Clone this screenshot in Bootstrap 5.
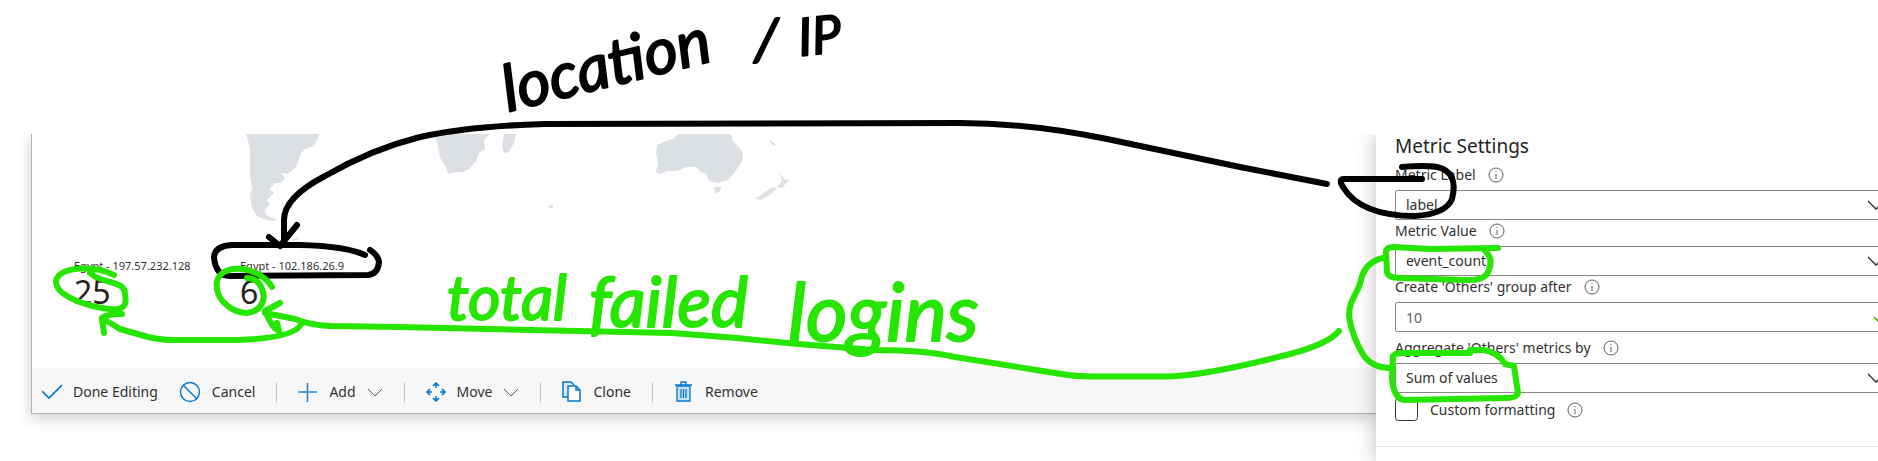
<!DOCTYPE html>
<html lang="en">
<head>
<meta charset="utf-8">
<meta name="viewport" content="width=device-width, initial-scale=1">
<title>Metric Settings</title>
<link href="https://cdn.jsdelivr.net/npm/bootstrap@5.3.0/dist/css/bootstrap.min.css" rel="stylesheet">
<style>
  body { font-family: "Noto Sans", "Open Sans", sans-serif; font-size: 14px; line-height: 20px; color: #323130; background: #fff; }
  .stage { padding-top: 134px; }
  .workspace { padding-left: 31px; min-height: 327px; }
  .editor { border: solid #b3b3b3; border-width: 0 0 1px 1px; box-shadow: 0 4px 14px rgba(0,0,0,.2); }
  .tiles { padding: 0 42px 56px; }
  .tile { width: 166px; }
  .tile-name { font-size: 11px; line-height: 12px; }
  .tile-value { font-size: 32px; line-height: 40px; color: #252423; }
  .toolbar { background: #f7f7f7; height: 45px; padding: 3px 10px 0; gap: 21px; }
  .tool { border: 0; background: none; padding: 0; color: inherit; display: flex; align-items: center; gap: 11px; }
  .tool svg { flex: none; }
  .rule { width: 1px; height: 21px; background: #c8c6c4; }
  .settings { width: 502px; background: #fff; box-shadow: 0 0 20px rgba(0,0,0,.26); }
  .fields { margin-right: -15px; padding-left: 19px; }
  .fields h2 { font-size: 19px; line-height: 24px; margin: 0 0 6px; color: #252423; }
  .caption { display: flex; align-items: center; gap: 12px; line-height: 22px; padding-bottom: 4px; }
  .caption.spaced { padding-top: 5px; }
  .box { height: 30px; border: 1px solid #8a8886; border-radius: 2px; padding: 0 10px; font-size: 14px; line-height: 20px; color: #323130; }
  .box.form-select { background-image: url("data:image/svg+xml,%3Csvg xmlns='http://www.w3.org/2000/svg' viewBox='0 0 16 16'%3E%3Cpath d='M0 4l8 8 8-8' fill='none' stroke='%23323130' stroke-width='1.4'/%3E%3C/svg%3E"); background-size: 16px 16px; background-position: right 8px center; }
  .box.count { color: #605e5c; background-image: url("data:image/svg+xml,%3Csvg xmlns='http://www.w3.org/2000/svg' viewBox='0 0 16 16'%3E%3Cpath d='M2 8l4 4 8-8' fill='none' stroke='%2357a300' stroke-width='1.6'/%3E%3C/svg%3E"); background-repeat: no-repeat; background-size: 16px 16px; background-position: right 4px center; }
  .check-row { padding-top: 5px; }
  .tick { width: 23px; height: 23px; margin: 0; border: 1px solid #323130; border-radius: 2px; }
  .settings hr { margin: 25px 0 0; border-color: #a19f9d; }
  .ink { pointer-events: none; fill: none; stroke-linecap: round; stroke-linejoin: round; stroke-width: 6px; }
  .ink text { font-family: Lato, "Open Sans", sans-serif; font-style: italic; stroke-width: 2px; }
  .black-pen { stroke: #000; }
  .green-pen { stroke: #26e600; }
  .black-pen text { fill: #000; }
  .green-pen text { fill: #26e600; }
</style>
</head>
<body>
<div class="stage position-relative overflow-hidden">
  <div class="d-flex align-items-stretch overflow-hidden">
    <main class="workspace flex-grow-1">
      <section class="editor">
        <svg class="d-block w-100" viewBox="32 134 1344 126" fill="#dce0e5" role="img" aria-label="World map">
          <path d="M246 134H319L317 140 314 146 305 149 301 153 299 160 295 168 288 174 282 173 285 179 280 183 275 183 270 189 274 193 267 200 270 204 265 210 266 215 272 218 277 219 274 221 266 220 257 216 252 208 250 195 252 188 250 175 250 148Z"/>
          <path d="M434 134H490L484 140 485 149 479 153 476 161 469 169 463 172 455 172 448 174 446 168 440 157 438 146ZM504 134H516L514 143 509 152 504 153 502 147Z"/>
          <path d="M678 134H731L733 141 738 146 743 153 742 162 735 172 728 180 718 183 709 181 706 174 701 172 696 167 687 167 677 171 668 171 660 174 656 172 658 164 656 154 657 145 668 140 674 139ZM714 187L722 187 719 192 715 193ZM770 140l6 5-2 1-5-5ZM780 173l4 6 5 1-7 8-5-1 5-6ZM777 188l-7 7-10 5-5-1 7-5 11-7ZM549 205l4 0 0 3-4 0ZM291 240l7-3 1 2-6 2Z"/>
        </svg>
        <div class="tiles d-flex">
          <div class="tile"><div class="tile-name">Egypt - 197.57.232.128</div><div class="tile-value">25</div></div>
          <div class="tile"><div class="tile-name">Egypt - 102.186.26.9</div><div class="tile-value">6</div></div>
        </div>
        <div class="toolbar d-flex align-items-center">
          <button class="tool" type="button"><svg width="20" height="20" fill="none" stroke="#0078d4" stroke-width="1.6"><path d="M0 9l7 7L20 3"/></svg>Done Editing</button>
          <button class="tool" type="button"><svg width="22" height="22" fill="none" stroke="#0078d4" stroke-width="1.4"><circle cx="11" cy="11" r="9.5"/><path d="M4 4l14 14"/></svg>Cancel</button>
          <span class="rule"></span>
          <button class="tool" type="button"><svg width="20" height="20" fill="none" stroke="#2b88d8" stroke-width="1.6"><path d="M0 10h19M9.500 1v19"/></svg>Add<svg width="16" height="16" fill="none" stroke="#605e5c"><path d="M1 5l7 7 7-7"/></svg></button>
          <span class="rule"></span>
          <button class="tool" type="button"><svg width="20" height="20" fill="none" stroke="#0078d4" stroke-width="1.6"><path d="M10 6V1M7 4l3-3 3 3M10 14v5M7 16l3 3 3-3M6 10H1M4 7l-3 3 3 3M14 10h5M16 7l3 3-3 3"/></svg>Move<svg width="16" height="16" fill="none" stroke="#605e5c"><path d="M1 5l7 7 7-7"/></svg></button>
          <span class="rule"></span>
          <button class="tool" type="button"><svg width="20" height="22" fill="none" stroke="#0078d4" stroke-width="1.5"><path d="M6 16H1V1h8l3 3" fill="#deecf9"/><path d="M6 5h8l4 4v11H6zM14 5v4h4" fill="#fff"/></svg>Clone</button>
          <span class="rule"></span>
          <button class="tool" type="button"><svg width="20" height="22" fill="none" stroke="#0078d4" stroke-width="1.3"><path d="M3 5h13v15H3z" fill="#c7e0f4"/><path d="M1 4h17M7 4V1h5v3M7 8v9M9.500 8v9M12 8v9"/></svg>Remove</button>
        </div>
      </section>
    </main>
    <aside class="settings flex-shrink-0 position-relative">
      <form class="fields">
        <h2 class="fw-normal">Metric Settings</h2>
        <div class="caption"><label for="mlabel">Metric Label</label><svg width="16" height="16" fill="none" stroke="#605e5c"><circle cx="8" cy="8" r="7"/><path d="M8 7v5M8 4v1"/></svg></div>
        <select class="form-select box" id="mlabel"><option>label</option></select>
        <div class="caption"><label for="mvalue">Metric Value</label><svg width="16" height="16" fill="none" stroke="#605e5c"><circle cx="8" cy="8" r="7"/><path d="M8 7v5M8 4v1"/></svg></div>
        <select class="form-select box" id="mvalue"><option>event_count</option></select>
        <div class="caption"><label for="others">Create 'Others' group after</label><svg width="16" height="16" fill="none" stroke="#605e5c"><circle cx="8" cy="8" r="7"/><path d="M8 7v5M8 4v1"/></svg></div>
        <input class="form-control box count" id="others" type="text" value="10">
        <div class="caption spaced"><label for="agg">Aggregate 'Others' metrics by</label><svg width="16" height="16" fill="none" stroke="#605e5c"><circle cx="8" cy="8" r="7"/><path d="M8 7v5M8 4v1"/></svg></div>
        <select class="form-select box" id="agg"><option>Sum of values</option></select>
        <div class="check-row d-flex align-items-center"><input class="form-check-input tick" id="custom" type="checkbox"><label class="ps-2 ms-1 me-2" for="custom">Custom formatting</label><svg class="ms-1" width="16" height="16" fill="none" stroke="#605e5c"><circle cx="8" cy="8" r="7"/><path d="M8 7v5M8 4v1"/></svg></div>
      </form>
      <hr>
    </aside>
  </div>

  <svg class="ink position-absolute top-0 start-0 w-100 h-100" viewBox="0 0 1878 461">
    <g class="black-pen">
      <text transform="rotate(-14 508 112)" x="508" y="112" font-size="64">location</text>
      <text x="754" y="60" font-size="58">/</text>
      <text transform="rotate(-6 800 56)" x="800" y="56" font-size="52">IP</text>
      <path d="M1327 184L1240 167 1107 139Q1030 123 960 123L545 124Q470 126 420 137 372 149 325 176C300 189 284 203 284 220V243M269 237L280 246 297 225"/>
      <path d="M365 255Q345 246 300 245H232Q214 246 214 258 216 276 230 276L368 275Q378 274 379 262 378 255 370 250"/>
      <path d="M1422 179H1344Q1338 179 1343 187C1357 210 1385 216 1415 216Q1446 214 1452 199 1459 172 1437 167 1426 165 1402 167"/>
    </g>
    <g class="green-pen">
      <text x="447" y="320" font-size="62">total</text>
      <text x="589" y="327" font-size="70">failed</text>
      <text x="788" y="341" font-size="80">logins</text>
      <path d="M114 275C96 265 58 266 56 281 55 299 103 311 118 309 127 307 126 301 125 293 124 280 101 284 90 273"/>
      <path d="M272 287C260 266 222 262 217 281 214 302 235 313 247 313 263 311 266 298 262 289Q258 278 247 278"/>
      <path d="M122 314Q102 314 102 319L104 333M102 318L120 329 148 337Q160 340 175 340H238Q296 338 302 323"/>
      <path d="M280 303L265 311Q272 328 279 331L277 323M265 313L295 319Q310 325 330 326L400 327 672 333 737 338 798 344 875 350Q925 350 955 357L1055 373Q1070 376 1090 376.500H1165Q1205 376 1290 354 1328 344 1339 331"/>
      <path d="M1383 258Q1365 262 1361 280C1358 294 1349 299 1349 316Q1352 337 1364 356 1374 369 1393 368"/>
      <path d="M1498 248L1430 249 1394 247Q1386 247 1386 252L1387 272Q1388 278 1400 278L1465 280Q1482 281 1487 274 1495 259 1485 251"/>
      <path d="M1470 350H1484Q1499 353 1505 364L1514 366 1518 393Q1517 398 1505 398L1404 400Q1393 398 1392 377L1393 356Q1395 353 1404 353L1470 353"/>
    </g>
  </svg>
</div>
<script src="https://cdn.jsdelivr.net/npm/bootstrap@5.3.0/dist/js/bootstrap.bundle.min.js"></script>
</body>
</html>
